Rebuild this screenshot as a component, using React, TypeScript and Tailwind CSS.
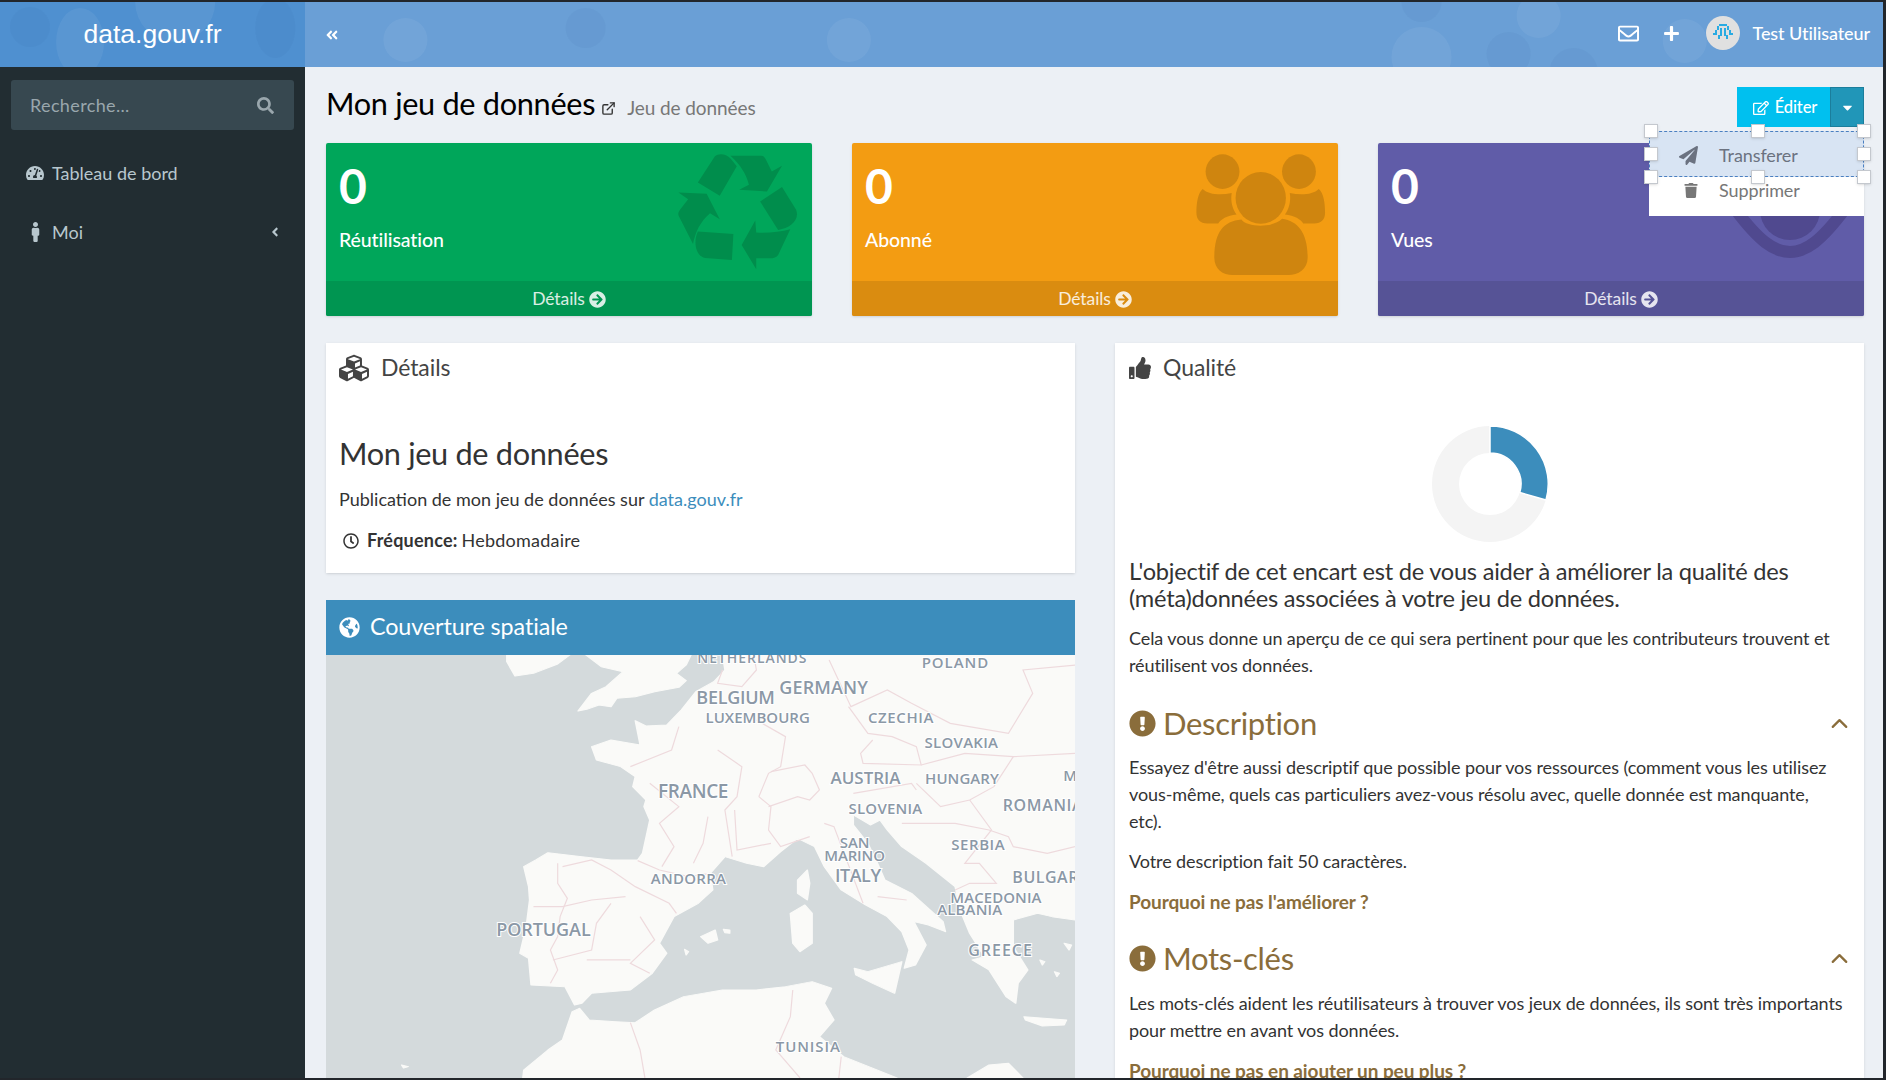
import { ChevronUp, ExternalLink } from "lucide-react";
import {
  FaAngleDoubleLeft,
  FaAngleLeft,
  FaArrowCircleRight,
  FaCaretDown,
  FaCubes,
  FaExclamationCircle,
  FaGlobeAmericas,
  FaMale,
  FaPaperPlane,
  FaPlus,
  FaRegClock,
  FaRegEdit,
  FaRegEnvelope,
  FaSearch,
  FaTachometerAlt,
  FaThumbsUp,
  FaTrash,
} from "react-icons/fa";

const land = [
  "385,15 385,35 402,78 440,70 490,42 515,15",
  "548,15 580,50 625,65 590,110 560,130 532,183 550,178 575,165 600,170 612,145 650,140 690,125 740,112 755,92 735,70 755,45 765,15",
  "830,15 835,60 812,95 775,125 745,180 715,225 672,228 650,212 660,285 600,270 560,290 570,330 620,350 650,380 645,410 672,450 668,470 680,510 665,610 655,630 600,630 540,620 470,608 445,630 420,650 430,710 432,750 425,830 412,910 430,925 435,1005 505,1010 525,1065 540,1060 560,1030 640,1020 685,970 715,910 700,880 730,800 780,760 810,720 805,670 835,620 880,640 915,650 950,605 985,565 1020,590 1040,650 1075,720 1125,765 1170,800 1200,845 1215,900 1205,955 1228,945 1250,885 1225,815 1255,825 1290,845 1285,815 1220,730 1165,690 1150,640 1130,580 1100,525 1100,495 1135,525 1155,510 1170,540 1200,590 1250,640 1310,710 1320,780 1340,850 1370,920 1345,930 1380,960 1415,1040 1435,1060 1440,1000 1460,960 1430,890 1430,810 1480,790 1510,800 1558,810 1558,15",
  "418,1284 420,1260 470,1200 500,1170 520,1085 535,1075 555,1110 610,1115 650,1118 690,1080 750,1040 830,1020 900,1020 960,1010 1015,995 1055,1015 1040,1060 1060,1110 1030,1160 1080,1220 1190,1284",
  "1335,1284 1380,1245 1420,1240 1450,1284",
  "1102,955 1130,965 1200,935 1185,1030 1140,1000 1105,975",
  "970,790 1000,765 1015,790 1015,880 990,905 975,880",
  "985,690 1005,660 1010,700 1005,750 985,730",
  "785,860 815,840 820,870 800,880",
  "832,838 845,840 845,850 835,848",
  "752,898 760,905 755,915",
  "1452,1100 1540,1110 1535,1125 1490,1128 1455,1110",
  "1485,930 1495,935 1490,945",
  "1515,965 1525,970 1520,980",
  "1535,880 1550,885 1545,900",
  "168,1245 182,1250 172,1254",
];

const borders = [
  "490,640 490,700 510,745 495,800 490,860 475,900 490,960 475,1000",
  "655,632 700,660 760,680 805,670",
  "500,650 560,630 600,660 650,710 720,760 735,790",
  "440,770 500,770 560,750 630,740",
  "600,760 570,820 560,900 480,930",
  "660,800 690,870 640,940 680,970",
  "550,930 640,930",
  "740,230 725,300 640,350",
  "820,300 870,350 860,440 835,480 850,620",
  "680,400 740,470 700,520 730,590 705,650",
  "800,500 790,580 770,640",
  "855,480 860,600 930,580",
  "830,60 820,100 870,110 900,60 895,20",
  "900,210 960,260 950,350 925,370 905,440",
  "905,440 930,470 925,540 950,590 1010,560",
  "925,470 985,440 1010,450 1030,420 1015,370 1000,345 930,365",
  "1090,170 1130,250 1180,260 1230,290 1240,345 1120,340 1115,310 1140,270",
  "1050,30 1095,170 1170,120 1220,160 1300,220 1420,250 1470,130 1450,60 1558,45",
  "1240,345 1330,310 1430,320 1558,310",
  "1230,400 1280,470 1340,450 1390,410 1430,320",
  "1100,430 1220,400 1230,420",
  "1200,520 1310,520 1380,540 1420,560 1430,590 1500,610 1558,590",
  "1340,450 1385,540 1330,640 1360,640 1395,700 1340,700 1310,720",
  "1040,520 1060,530 1120,760",
  "1150,740 1210,750",
  "640,1118 660,1200 670,1284",
  "975,1020 970,1100 940,1200 990,1284",
  "1075,1220 1070,1284",
];

const labels: [string, number, number, number, number][] = [
  ["NETHERLANDS", 778, 25, 225, 14],
  ["POLAND", 1241, 37, 137, 15],
  ["GERMANY", 947, 112, 183, 18],
  ["BELGIUM", 776, 144, 162, 18],
  ["LUXEMBOURG", 795, 203, 215, 15],
  ["CZECHIA", 1130, 203, 135, 15],
  ["SLOVAKIA", 1247, 278, 151, 15],
  ["AUSTRIA", 1053, 385, 144, 17],
  ["HUNGARY", 1248, 385, 152, 15],
  ["M", 1533, 378, 30, 15],
  ["FRANCE", 697, 424, 145, 19],
  ["ROMANIA", 1408, 465, 165, 16],
  ["SLOVENIA", 1090, 477, 152, 15],
  ["SAN", 1072, 577, 61, 15],
  ["MARINO", 1040, 618, 125, 15],
  ["SERBIA", 1302, 584, 110, 15],
  ["ANDORRA", 682, 686, 155, 15],
  ["ITALY", 1062, 678, 95, 18],
  ["BULGARIA", 1428, 682, 170, 16],
  ["MACEDONIA", 1300, 742, 188, 15],
  ["ALBANIA", 1273, 778, 134, 15],
  ["PORTUGAL", 363, 838, 195, 18],
  ["GREECE", 1337, 900, 131, 16],
  ["TUNISIA", 940, 1190, 132, 15],
];

function MapView() {
  return (
    <svg viewBox="0 0 749 423" className="block w-[749px] h-[423px] bg-[#d4dadc]">
      <g transform="scale(0.4847 0.3333) translate(-12 -15)">
        {land.map((p) => (
          <polygon key={p} points={p} fill="#fafaf8" stroke="#fafaf8" strokeWidth="3" strokeLinejoin="round" />
        ))}
        {borders.map((p) => (
          <polyline key={p} points={p} fill="none" stroke="#eedadd" strokeWidth="1.2" vectorEffect="non-scaling-stroke" />
        ))}
      </g>
      {labels.map(([name, x, y, w, size]) => (
        <text
          key={name}
          x={(x - 12) * 0.4847}
          y={(y - 15) * 0.3333 + size * 0.36}
          textLength={w * 0.4847}
          lengthAdjust="spacing"
          fontSize={size}
          fontWeight="600"
          fontFamily="'Open Sans', sans-serif"
          fill="#8b98a6"
          stroke="#ffffff"
          strokeWidth="2"
          paintOrder="stroke"
        >
          {name}
        </text>
      ))}
    </svg>
  );
}

function Bokeh() {
  return (
    <svg className="absolute inset-0 w-full h-full" viewBox="0 0 1881 65" preserveAspectRatio="none">
      <g fill="#ffffff" fillOpacity="0.06">
        <ellipse cx="80" cy="40" rx="24" ry="34" />
        <circle cx="175" cy="0" r="40" />
        <circle cx="405" cy="38" r="22" />
        <circle cx="848" cy="38" r="22" />
        <circle cx="1537" cy="14" r="22" />
        <circle cx="1683" cy="39" r="22" />
        <circle cx="1420" cy="55" r="30" />
      </g>
      <g fill="#1f4e82" fillOpacity="0.05">
        <ellipse cx="275" cy="26" rx="20" ry="30" />
        <circle cx="30" cy="25" r="20" />
        <circle cx="585" cy="26" r="20" />
        <circle cx="1507" cy="52" r="22" />
        <circle cx="1420" cy="0" r="20" />
        <circle cx="1572" cy="70" r="24" />
      </g>
    </svg>
  );
}

function RecycleGlyph() {
  return (
    <svg
      viewBox="75 70 255 350"
      preserveAspectRatio="none"
      className="absolute right-[12px] top-[10px] w-[124px] h-[117px]"
      fill="#008d4c"
    >
      <path d="M120 158 L155 80 C162 70 180 72 188 88 L200 110 L165 198Z" />
      <path d="M187 78 L250 78 C255 78 258 84 260 90 L272 125 L293 108 L262 185 L205 180 L225 165 C220 135 208 105 187 78Z" />
      <path d="M248 215 L293 172 L322 240 C330 270 310 295 285 300Z" />
      <path d="M310 298 L285 375 C282 382 276 385 268 385 L240 385 L240 418 L210 345 L238 272 L240 308 C265 310 290 306 310 298Z" />
      <path d="M120 305 L193 312 L190 390 L135 384 C115 378 110 335 120 305Z" />
      <path d="M80 188 L138 192 L165 268 L145 250 C125 275 115 305 110 342 L82 262 C78 252 80 246 84 238 L100 208Z" />
    </svg>
  );
}

function UsersGlyph() {
  return (
    <svg
      viewBox="1140 70 275 370"
      preserveAspectRatio="none"
      className="absolute right-[11px] top-[10px] w-[133px] h-[123px]"
      fill="#cf850f"
    >
      <ellipse cx="1199" cy="126" rx="35" ry="52" />
      <ellipse cx="1357" cy="126" rx="35" ry="52" />
      <ellipse cx="1278" cy="205" rx="52" ry="78" />
      <path d="M1238 270 C1250 295 1305 295 1322 268 C1355 275 1375 310 1375 385 C1375 420 1355 437 1335 437 L1220 437 C1200 437 1182 420 1182 385 C1182 310 1200 275 1238 270Z" />
      <path d="M1158 178 C1170 195 1195 198 1218 190 C1215 215 1220 240 1228 255 C1208 258 1195 270 1190 282 L1168 282 C1152 282 1145 270 1145 250 C1145 220 1148 190 1158 178Z" />
      <path d="M1398 178 C1386 195 1361 198 1338 190 C1341 215 1336 240 1328 255 C1348 258 1361 270 1366 282 L1388 282 C1404 282 1411 270 1411 250 C1411 220 1408 190 1398 178Z" />
    </svg>
  );
}

function EyeGlyph() {
  return (
    <svg viewBox="0 0 122 122" className="absolute right-[13px] top-[26px] w-[122px] h-[122px]" fill="none">
      <path d="M6 40 C30 72 45 83 61 83 C77 83 92 72 116 40" stroke="#50498f" strokeWidth="12" />
      <circle cx="61" cy="41" r="30" fill="#50498f" />
    </svg>
  );
}

function StatCard({
  label,
  body,
  foot,
  glyph,
}: {
  label: string;
  body: string;
  foot: string;
  glyph: React.ReactNode;
}) {
  return (
    <div className={`relative h-[173px] rounded-[2px] overflow-hidden flex flex-col text-white shadow-sm ${body}`}>
      {glyph}
      <div className="relative flex-1 pl-[13px]">
        <div className="text-[48px] font-bold leading-none mt-[19px]">0</div>
        <div className="text-[19.5px] font-medium leading-[26px] mt-[17px]">{label}</div>
      </div>
      <div className={`relative h-[35px] pt-[1px] flex items-center justify-center gap-[4px] text-[17.5px] text-white/85 ${foot}`}>
        Détails <FaArrowCircleRight className="w-[17px] h-[17px]" />
      </div>
    </div>
  );
}

function Handle({ className }: { className: string }) {
  return <span className={`absolute w-[14px] h-[14px] bg-white border border-[#c4c8ce] shadow-sm ${className}`} />;
}

function Donut() {
  return (
    <svg viewBox="0 0 120 120" className="block mx-auto w-[120px] h-[120px]">
      <path
        fillRule="evenodd"
        d="M60 2 A58 58 0 1 0 60 118 A58 58 0 1 0 60 2Z M60 29 A31 31 0 1 1 60 91 A31 31 0 1 1 60 29Z"
        fill="#f4f4f4"
      />
      <path
        d="M60 2 A58 58 0 0 1 116 76 L89.8 68.5 A31 31 0 0 0 60 29Z"
        fill="#3c8dbc"
        stroke="#ffffff"
        strokeWidth="1.5"
      />
    </svg>
  );
}

function QualityHeading({ title }: { title: string }) {
  return (
    <div className="flex items-center text-[#8a6d3b] h-[40px]">
      <FaExclamationCircle className="w-[27px] h-[27px] shrink-0" />
      <span className="text-[31px] ml-[7px] tracking-[-0.01em]">{title}</span>
      <ChevronUp className="ml-auto -mr-[3px] w-[27px] h-[27px]" strokeWidth={2} />
    </div>
  );
}

export default function App() {
  return (
    <div className="h-screen w-full overflow-hidden flex flex-col bg-[#22262b] pt-[2px] pb-[2px] pr-[3px] font-[Lato,sans-serif] text-[18px] tracking-[-0.005em] text-[#333]">
      <header className="relative h-[65px] shrink-0 flex text-white">
        <div className="w-[305px] bg-[#4f90d0] flex items-center justify-center font-['Liberation_Sans',sans-serif] text-[26.5px] tracking-normal">
          <span className="relative">data.gouv.fr</span>
        </div>
        <div className="flex-1 bg-[#6a9fd6] flex items-center">
          <FaAngleDoubleLeft className="relative ml-[20px] w-[14px] h-[14px]" />
          <div className="relative ml-auto pb-[3px] flex items-center">
            <FaRegEnvelope className="w-[21px] h-[21px]" />
            <FaPlus className="ml-[24px] w-[17px] h-[17px]" />
            <div className="ml-[26px] w-[34px] h-[34px] rounded-full bg-[#e0e0e0] flex items-center justify-center">
              <svg viewBox="0 0 24 24" className="w-[24px] h-[24px]" fill="#29abe2">
                <path d="M8 3h8v2H8zM6 5h2v4H6zM16 5h2v4h-2zM4 9h2v5H4zM9 7h2v8H9zM13 7h2v8h-2zM18 9h2v5h-2zM2 12h2v2H2zM20 12h2v2h-2zM7 14h2v4H7zM15 14h2v4h-2z" />
              </svg>
            </div>
            <span className="ml-[13px] mr-[13px] text-[18px] font-medium">Test Utilisateur</span>
          </div>
        </div>
        <Bokeh />
      </header>
      <div className="flex flex-1 min-h-0">
        <aside className="w-[305px] shrink-0 bg-[#222d32] text-[#b8c7ce] text-[18px] tracking-normal">
          <div className="mt-[13px] mx-[11px] h-[50px] rounded-[3px] bg-[#374850] flex items-center justify-between pl-[19px] pr-[20px] text-[#9aa7ad]">
            <span className="tracking-[0.02em]">Recherche...</span>
            <FaSearch className="w-[17px] h-[17px]" />
          </div>
          <div className="mt-[27px] h-[32px] flex items-center pl-[26px]">
            <FaTachometerAlt className="w-[18px] h-[18px]" />
            <span className="ml-[8px]">Tableau de bord</span>
          </div>
          <div className="mt-[27px] h-[32px] flex items-center pl-[26px] pr-[23px]">
            <FaMale className="w-[19px] h-[20px]" />
            <span className="ml-[7px]">Moi</span>
            <FaAngleLeft className="ml-auto w-[14px] h-[14px]" />
          </div>
        </aside>
        <main className="flex-1 min-w-0 flex flex-col bg-[#ecf0f5] pl-[21px] pr-[19px] overflow-hidden">
          <div className="h-[76px] shrink-0 flex items-start">
            <h1 className="mt-[16px] text-[30.7px] leading-[42px] text-black tracking-[-0.01em]">Mon jeu de données</h1>
            <ExternalLink className="mt-[34px] ml-[6px] w-[15px] h-[15px] text-[#333]" strokeWidth={2.2} />
            <span className="mt-[27px] ml-[11px] text-[19px] text-[#777]">Jeu de données</span>
            <div className="relative ml-auto mt-[20px] flex text-white text-[16.5px] font-medium">
              <div className="h-[40px] w-[93px] pt-[1px] pl-[3px] bg-[#00c0ef] flex items-center justify-center gap-[6px]">
                <FaRegEdit className="w-[16px] h-[16px]" />
                Éditer
              </div>
              <div className="h-[40px] w-[34px] bg-[#2196b8] border border-[#1b7e9c] flex items-center justify-center">
                <FaCaretDown className="w-[15px] h-[15px]" />
              </div>
              <div className="absolute z-10 right-0 top-[44px] w-[215px] h-[85px] bg-white text-[18px] font-normal">
                <div className="relative h-[46px] pt-[2px] flex items-center bg-[#d8e4f3] border border-dashed border-[#4a7fc0] text-[#6b7280]">
                  <FaPaperPlane className="ml-[29px] w-[19px] h-[19px]" />
                  <span className="ml-[21px]">Transferer</span>
                  <Handle className="-left-[6px] -top-[8px]" />
                  <Handle className="left-[101px] -top-[8px]" />
                  <Handle className="-right-[8px] -top-[8px]" />
                  <Handle className="-left-[6px] top-[15px]" />
                  <Handle className="-right-[8px] top-[15px]" />
                  <Handle className="-left-[6px] -bottom-[8px]" />
                  <Handle className="left-[101px] -bottom-[8px]" />
                  <Handle className="-right-[8px] -bottom-[8px]" />
                </div>
                <div className="flex items-center h-[26px] text-[#777]">
                  <FaTrash className="ml-[35px] w-[14px] h-[15px]" />
                  <span className="ml-[21px]">Supprimer</span>
                </div>
              </div>
            </div>
          </div>

          <div className="grid grid-cols-3 gap-[40px] shrink-0">
            <StatCard label="Réutilisation" body="bg-[#00a65a]" foot="bg-[#009551]" glyph={<RecycleGlyph />} />
            <StatCard label="Abonné" body="bg-[#f39c12]" foot="bg-[#da8c10]" glyph={<UsersGlyph />} />
            <StatCard label="Vues" body="bg-[#605ca8]" foot="bg-[#565396]" glyph={<EyeGlyph />} />
          </div>

          <div className="mt-[27px] flex-1 min-h-0 grid grid-cols-2 gap-[40px]">
            <div className="flex flex-col min-h-0">
              <section className="h-[230px] shrink-0 bg-white shadow-sm px-[13px]">
                <div className="flex items-center h-[49px] text-[#444]">
                  <FaCubes className="w-[30px] h-[30px]" />
                  <span className="ml-[12px] text-[23px]">Détails</span>
                </div>
                <h2 className="mt-[41px] text-[30.7px] leading-[42px] text-[#333] tracking-[-0.01em]">Mon jeu de données</h2>
                <p className="mt-[11px] leading-[27px] tracking-normal">
                  Publication de mon jeu de données sur <a className="text-[#3c8dbc]">data.gouv.fr</a>
                </p>
                <div className="mt-[14px] flex items-center leading-[27px] tracking-[0.012em]">
                  <FaRegClock className="ml-[4px] w-[16px] h-[16px]" />
                  <b className="ml-[8px] font-bold">Fréquence:</b>
                  <span className="ml-[4px]">Hebdomadaire</span>
                </div>
              </section>
              <section className="mt-[27px] flex-1 min-h-0 overflow-hidden">
                <div className="h-[55px] bg-[#3c8dbc] text-white flex items-center px-[13px]">
                  <FaGlobeAmericas className="w-[21px] h-[21px]" />
                  <span className="ml-[10px] text-[23.3px] -mt-[3px]">Couverture spatiale</span>
                </div>
                <MapView />
              </section>
            </div>
            <section className="bg-white shadow-sm pl-[14px] pr-[10px] overflow-hidden">
              <div className="flex items-center h-[49px] text-[#444]">
                <FaThumbsUp className="w-[22px] h-[22px]" />
                <span className="ml-[12px] text-[23px]">Qualité</span>
              </div>
              <div className="mt-[32px] pr-[4px]">
                <Donut />
              </div>
              <h3 className="mt-[14px] pr-[4px] text-[23.6px] leading-[27px] tracking-[-0.01em]">
                L'objectif de cet encart est de vous aider à améliorer la qualité des (méta)données associées à votre jeu de
                données.
              </h3>
              <p className="mt-[13px] leading-[27px]">
                Cela vous donne un aperçu de ce qui sera pertinent pour que les contributeurs trouvent et réutilisent vos
                données.
              </p>
              <div className="mt-[24px] pr-[4px]">
                <QualityHeading title="Description" />
              </div>
              <p className="mt-[11px] pr-[4px] leading-[27px]">
                Essayez d'être aussi descriptif que possible pour vos ressources (comment vous les utilisez vous-même, quels
                cas particuliers avez-vous résolu avec, quelle donnée est manquante,
                <br />
                etc).
              </p>
              <p className="mt-[13px] leading-[27px]">Votre description fait 50 caractères.</p>
              <p className="mt-[13px] leading-[27px] text-[19px] font-bold text-[#8a6d3b]">Pourquoi ne pas l'améliorer ?</p>
              <div className="mt-[23px] pr-[4px]">
                <QualityHeading title="Mots-clés" />
              </div>
              <p className="mt-[12px] leading-[27px]">
                Les mots-clés aident les réutilisateurs à trouver vos jeux de données, ils sont très importants pour mettre
                en avant vos données.
              </p>
              <p className="mt-[13px] leading-[27px] text-[19px] font-bold text-[#8a6d3b]">Pourquoi ne pas en ajouter un peu plus ?</p>
            </section>
          </div>
        </main>
      </div>
    </div>
  );
}
